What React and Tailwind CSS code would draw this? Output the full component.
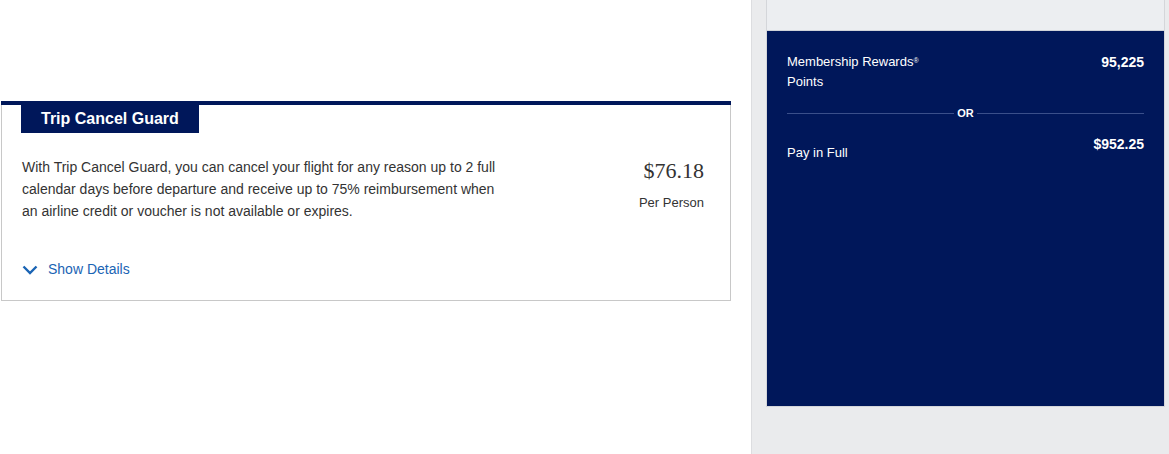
import React from 'react';

const font = { fontFamily: '"Liberation Sans", Arial, sans-serif' };

function TripCancelCard() {
  return (
    <div className="ml-[1px] w-[730px] border border-t-0 border-[#c8c8c8]">
      <div className="h-[4px] -mx-[1px] bg-[#00175a]" />
      <div className="ml-[19px] inline-flex h-[28px] items-center bg-[#00175a] px-[20px] text-[16px] font-bold text-white">
        Trip Cancel Guard
      </div>
      <div className="flex justify-between pl-[20px] pr-[26px] pt-[23px]">
        <p className="w-[520px] text-[14px] leading-[22px] text-[#333]">
          With Trip Cancel Guard, you can cancel your flight for any reason up to 2 full calendar days before departure
          and receive up to 75% reimbursement when
          <br />
          an airline credit or voucher is not available or expires.
        </p>
        <div className="flex flex-col items-end pt-[2px]">
          <span
            className="text-[22px] leading-[26px] text-[#333]"
            style={{ fontFamily: '"Liberation Serif", Georgia, serif' }}
          >
            $76.18
          </span>
          <span className="mt-[9px] text-[13px] text-[#333]">Per Person</span>
        </div>
      </div>
      <button className="mt-[37px] mb-[20px] ml-[20px] flex items-center gap-[10px] text-[14px] text-[#1a64b4]">
        <svg width="16" height="10" viewBox="0 0 16 10" fill="none">
          <path d="M1.5 1.5l6.5 6.5 6.5-6.5" stroke="#1a64b4" strokeWidth="2.4" />
        </svg>
        Show Details
      </button>
    </div>
  );
}

function PointsPanel() {
  return (
    <div className="w-[399px] h-[407px] border border-[#d4d6da] border-t-0 flex flex-col">
      <div className="h-[31px] bg-[#eceef1] border-b border-[#cfd2d8]" />
      <div className="flex-1 bg-[#00175a] px-[20px] pt-[21px] text-white">
        <div className="flex justify-between text-[13px] leading-[20px]">
          <span>
            Membership Rewards<sup className="text-[7px]">®</sup>
            <br />
            Points
          </span>
          <span className="font-bold text-[14px]">95,225</span>
        </div>
        <div className="mt-[14px] flex items-center gap-[3px]">
          <div className="h-px flex-1 bg-[#3a4f8a]" />
          <span className="text-[11px] font-bold leading-[14px]">OR</span>
          <div className="h-px flex-1 bg-[#3a4f8a]" />
        </div>
        <div className="mt-[14px] flex justify-between items-start">
          <span className="mt-[9px] text-[13px] leading-[20px]">Pay in Full</span>
          <span className="font-bold text-[14px] leading-[20px]">$952.25</span>
        </div>
      </div>
    </div>
  );
}

export default function App() {
  return (
    <div className="flex h-[454px] w-[1169px] overflow-hidden bg-[#eaebed]" style={font}>
      <div className="w-[752px] shrink-0 bg-white border-r border-[#dcdde0] pt-[101px]">
        <TripCancelCard />
      </div>
      <div className="pl-[14px]">
        <PointsPanel />
      </div>
    </div>
  );
}
